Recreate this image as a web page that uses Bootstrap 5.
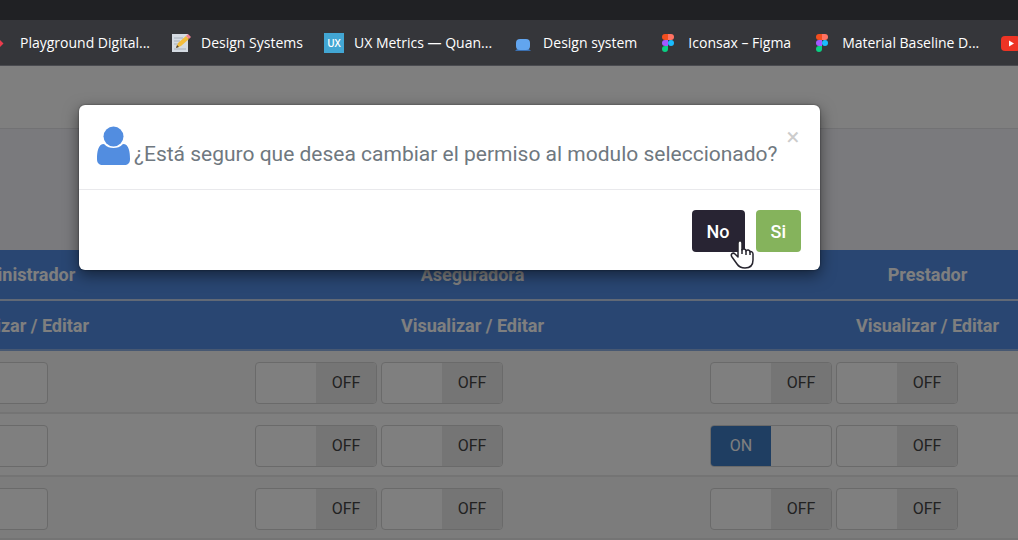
<!DOCTYPE html>
<html lang="es">
<head>
<meta charset="utf-8">
<meta name="viewport" content="width=device-width, initial-scale=1">
<title>Permisos por perfil</title>
<link href="https://cdn.jsdelivr.net/npm/bootstrap@5.3.0/dist/css/bootstrap.min.css" rel="stylesheet">
<style>
  body { font-family: Roboto, "Liberation Sans", sans-serif; background: #202124; }
  .tab-strip { height: 20px; }
  .bookmarks { height: 46px; background: #35363a; border-bottom: 1px solid #4a4b50; font-family: "Open Sans", "Noto Sans", sans-serif; font-size: 14px; font-weight: 500; gap: 21px; }
  .bookmarks a { color: #fff; gap: 10px; }
  .bookmarks a:first-child { margin-left: -10px; }
  .bookmarks svg { width: 20px; height: 20px; flex: none; }
  .viewport { background: #f5f5fa; }
  .page-top { height: 63px; background: #fff; border-bottom: 1px solid #e4e4e8; }
  .page-space { height: 121px; }
  .perm-scroll { background: #fff; }
  .perm-table { width: 1365px; margin-left: -210px; table-layout: fixed; font-size: 16px; }
  .perm-table th { height: 50px; background: #528ce4; color: #fff; text-align: center; vertical-align: middle; font-size: 18px; font-weight: 700; padding: 0; }
  .perm-table thead tr { border-bottom: 2px solid #c3d3ec; }
  .perm-table thead tr + tr { border-bottom: 2px solid #8fb0e4; }
  .perm-table td { height: 63px; padding: 10px 10px 8px; vertical-align: middle; border-bottom: 2px solid #e9e9e9; }
  .perm-table tbody tr:nth-child(odd) { background: #f9f9f9; }
  .switch { width: 122px; height: 42px; border: 1px solid #d4d4d4; border-radius: 4px; overflow: hidden; cursor: pointer; background: #fff; }
  .switch span { width: 60px; line-height: 40px; text-align: center; flex: none; }
  .switch .state-off { background: #ebebeb; color: #444; }
  .switch .state-on { background: #3f7cc4; color: #fff; display: none; }
  .switch input:checked ~ .state-on { display: block; }
  .switch input:checked ~ .state-off { display: none; }
  .shade { background: rgba(0, 0, 0, .5); z-index: 1; }
  .confirm { position: absolute; z-index: 2; overflow: hidden; }
  .confirm .modal-dialog { max-width: 741px; margin: 39px 79px; }
  .confirm .modal-content { border: 0; border-radius: 6px; box-shadow: 0 5px 15px rgba(0, 0, 0, .5), 0 0 2px rgba(0, 0, 0, .5); }
  .confirm .modal-header { padding: 21px 18px 23px; border-bottom: 1px solid #e9e9ec; }
  .confirm .modal-title { font-size: 21px; line-height: 24px; color: #6f7880; font-weight: 400; gap: 4px; }
  .confirm .modal-title span { padding-top: 16px; }
  .confirm .dismiss { font-size: 24px; line-height: 22px; color: #ccc; border: 0; background: none; padding: 0; width: 18px; }
  .confirm .modal-footer { padding: 20px 19px 18px; gap: 11px; border: 0; }
  .confirm .modal-footer .btn { height: 42px; margin: 0; font-size: 18px; font-weight: 500; padding: 0 15px; color: #fff; border: 0; border-radius: 4px; }
  .btn-no { background: #282433; }
  .btn-yes { background: #85b35c; }
  .pointer { right: 62px; bottom: -3px; width: 24px; height: 30px; }
</style>
</head>
<body class="d-flex flex-column vh-100 overflow-hidden">

<div class="tab-strip flex-shrink-0"></div>
<nav class="bookmarks d-flex align-items-center flex-shrink-0 overflow-hidden text-nowrap" aria-label="Marcadores">
  <a href="#" class="d-flex align-items-center text-decoration-none">
    <svg viewBox="0 0 20 20"><path d="M9 6l4.500 4.500L9 15l-4.500-4.500z" fill="#ea3c4d"/></svg>
    <span>Playground Digital...</span></a>
  <a href="#" class="d-flex align-items-center text-decoration-none">
    <svg viewBox="0 0 20 20"><path d="M1 1h16v18H1z" fill="#d5dbe2"/><path d="M3 5h9M3 8h6M3 11h4M3 16h12" stroke="#a6b0bb"/><path d="M5 15l2-5 8-7 3 3-8 7z" fill="#f3bd3c"/><path d="M15 3l2-2 3 3-2 2z" fill="#ee8291"/><path d="M5 15l1-3 2 2z" fill="#4b4037"/></svg>
    <span>Design Systems</span></a>
  <a href="#" class="d-flex align-items-center text-decoration-none">
    <svg viewBox="0 0 20 20"><path d="M0 0h20v20H0z" fill="#42a6d3"/><text x="10" y="14" text-anchor="middle" font-family="Open Sans" font-size="10" font-weight="600" fill="#fff">UX</text></svg>
    <span>UX Metrics — Quan...</span></a>
  <a href="#" class="d-flex align-items-center text-decoration-none">
    <svg viewBox="0 0 20 20"><path d="M2 18l3-3h10l3 3z" fill="#3a6fb0"/><rect x="3" y="6" width="14" height="11" rx="4" fill="#62a5ee"/></svg>
    <span>Design system</span></a>
  <a href="#" class="d-flex align-items-center text-decoration-none">
    <svg viewBox="0 0 20 20"><path d="M10 1H7a3 3 0 0 0 0 6h3z" fill="#f24e1e"/><path d="M10 1h3a3 3 0 0 1 0 6h-3z" fill="#ff7262"/><path d="M10 7H7a3 3 0 0 0 0 6h3z" fill="#a259ff"/><circle cx="13" cy="10" r="3" fill="#1abcfe"/><path d="M10 13H7a3 3 0 1 0 3 3z" fill="#0acf83"/></svg>
    <span>Iconsax – Figma</span></a>
  <a href="#" class="d-flex align-items-center text-decoration-none">
    <svg viewBox="0 0 20 20"><path d="M10 1H7a3 3 0 0 0 0 6h3z" fill="#f24e1e"/><path d="M10 1h3a3 3 0 0 1 0 6h-3z" fill="#ff7262"/><path d="M10 7H7a3 3 0 0 0 0 6h3z" fill="#a259ff"/><circle cx="13" cy="10" r="3" fill="#1abcfe"/><path d="M10 13H7a3 3 0 1 0 3 3z" fill="#0acf83"/></svg>
    <span>Material Baseline D...</span></a>
  <a href="#" class="d-flex align-items-center" aria-label="YouTube">
    <svg viewBox="0 0 20 20"><rect x="1" y="3" width="19" height="15" rx="4" fill="#ee3424"/><path d="M9 7.500l5 3-5 3z" fill="#fff"/></svg></a>
</nav>

<div class="viewport position-relative flex-grow-1 overflow-hidden">
  <header class="page-top"></header>
  <div class="page-space"></div>
  <div class="perm-scroll overflow-hidden">
    <table class="perm-table">
      <thead>
        <tr><th>Administrador</th><th>Aseguradora</th><th>Prestador</th></tr>
        <tr><th>Visualizar / Editar</th><th>Visualizar / Editar</th><th>Visualizar / Editar</th></tr>
      </thead>
      <tbody id="permissions"></tbody>
    </table>
  </div>

  <div class="shade position-absolute top-0 start-0 w-100 h-100"></div>

  <div class="modal confirm d-block" role="dialog" aria-labelledby="question">
    <div class="modal-dialog">
      <div class="modal-content">
        <div class="modal-header align-items-start justify-content-between">
          <h1 class="modal-title d-flex align-items-start text-nowrap" id="question">
            <svg width="33" height="40" viewBox="0 0 33 40"><path d="M7 18C1 18 0 26 0 33c0 4 2 6 6 6h21c4 0 6-2 6-6 0-7-1-15-7-15-3 3-6 4-9.500 4S10 21 7 18z" fill="#528de0"/><circle cx="16.500" cy="10.500" r="10" fill="#528de0"/></svg>
            <span>¿Está seguro que desea cambiar el permiso al modulo seleccionado?</span>
          </h1>
          <button type="button" class="dismiss" aria-label="Cerrar">×</button>
        </div>
        <div class="modal-footer position-relative">
          <button type="button" class="btn btn-no">No</button>
          <button type="button" class="btn btn-yes">Si</button>
          <svg class="pointer position-absolute" viewBox="0 0 24 30"><path d="M8 18V4c0-3 4-3 4 0v7c1-2 4-1 4 1 1-2 4-1 4 1 1-1 3 0 3 2v6c0 5-3 8-8 8-4 0-6-1-8-4l-5-7c-2-3 1-5 3-3z" fill="#fff" stroke="#26242e" stroke-width="1.500" stroke-linejoin="round"/><path d="M12 10v5M16 12v4M20 13v3" stroke="#26242e" stroke-width="1.500"/></svg>
        </div>
      </div>
    </div>
  </div>
</div>

<script src="https://cdn.jsdelivr.net/npm/bootstrap@5.3.0/dist/js/bootstrap.bundle.min.js"></script>
<script>
  const profiles = ['Administrador', 'Aseguradora', 'Prestador'];
  // Each row lists [view, edit] for every profile
  const rows = [
    [[1, 1], [0, 0], [0, 0]],
    [[1, 1], [0, 0], [1, 0]],
    [[1, 1], [0, 0], [0, 0]]
  ];
  const toggle = (on, name) => `<label class="switch d-flex"><input type="checkbox" class="visually-hidden" aria-label="${name}"${on ? ' checked' : ''}><span class="state-on">ON</span><span></span><span class="state-off">OFF</span></label>`;
  document.getElementById('permissions').innerHTML = rows.map(row =>
    '<tr>' + row.map((p, i) => `<td><div class="d-flex gap-1">${toggle(p[0], 'Visualizar ' + profiles[i])}${toggle(p[1], 'Editar ' + profiles[i])}</div></td>`).join('') + '</tr>').join('');
</script>
</body>
</html>
